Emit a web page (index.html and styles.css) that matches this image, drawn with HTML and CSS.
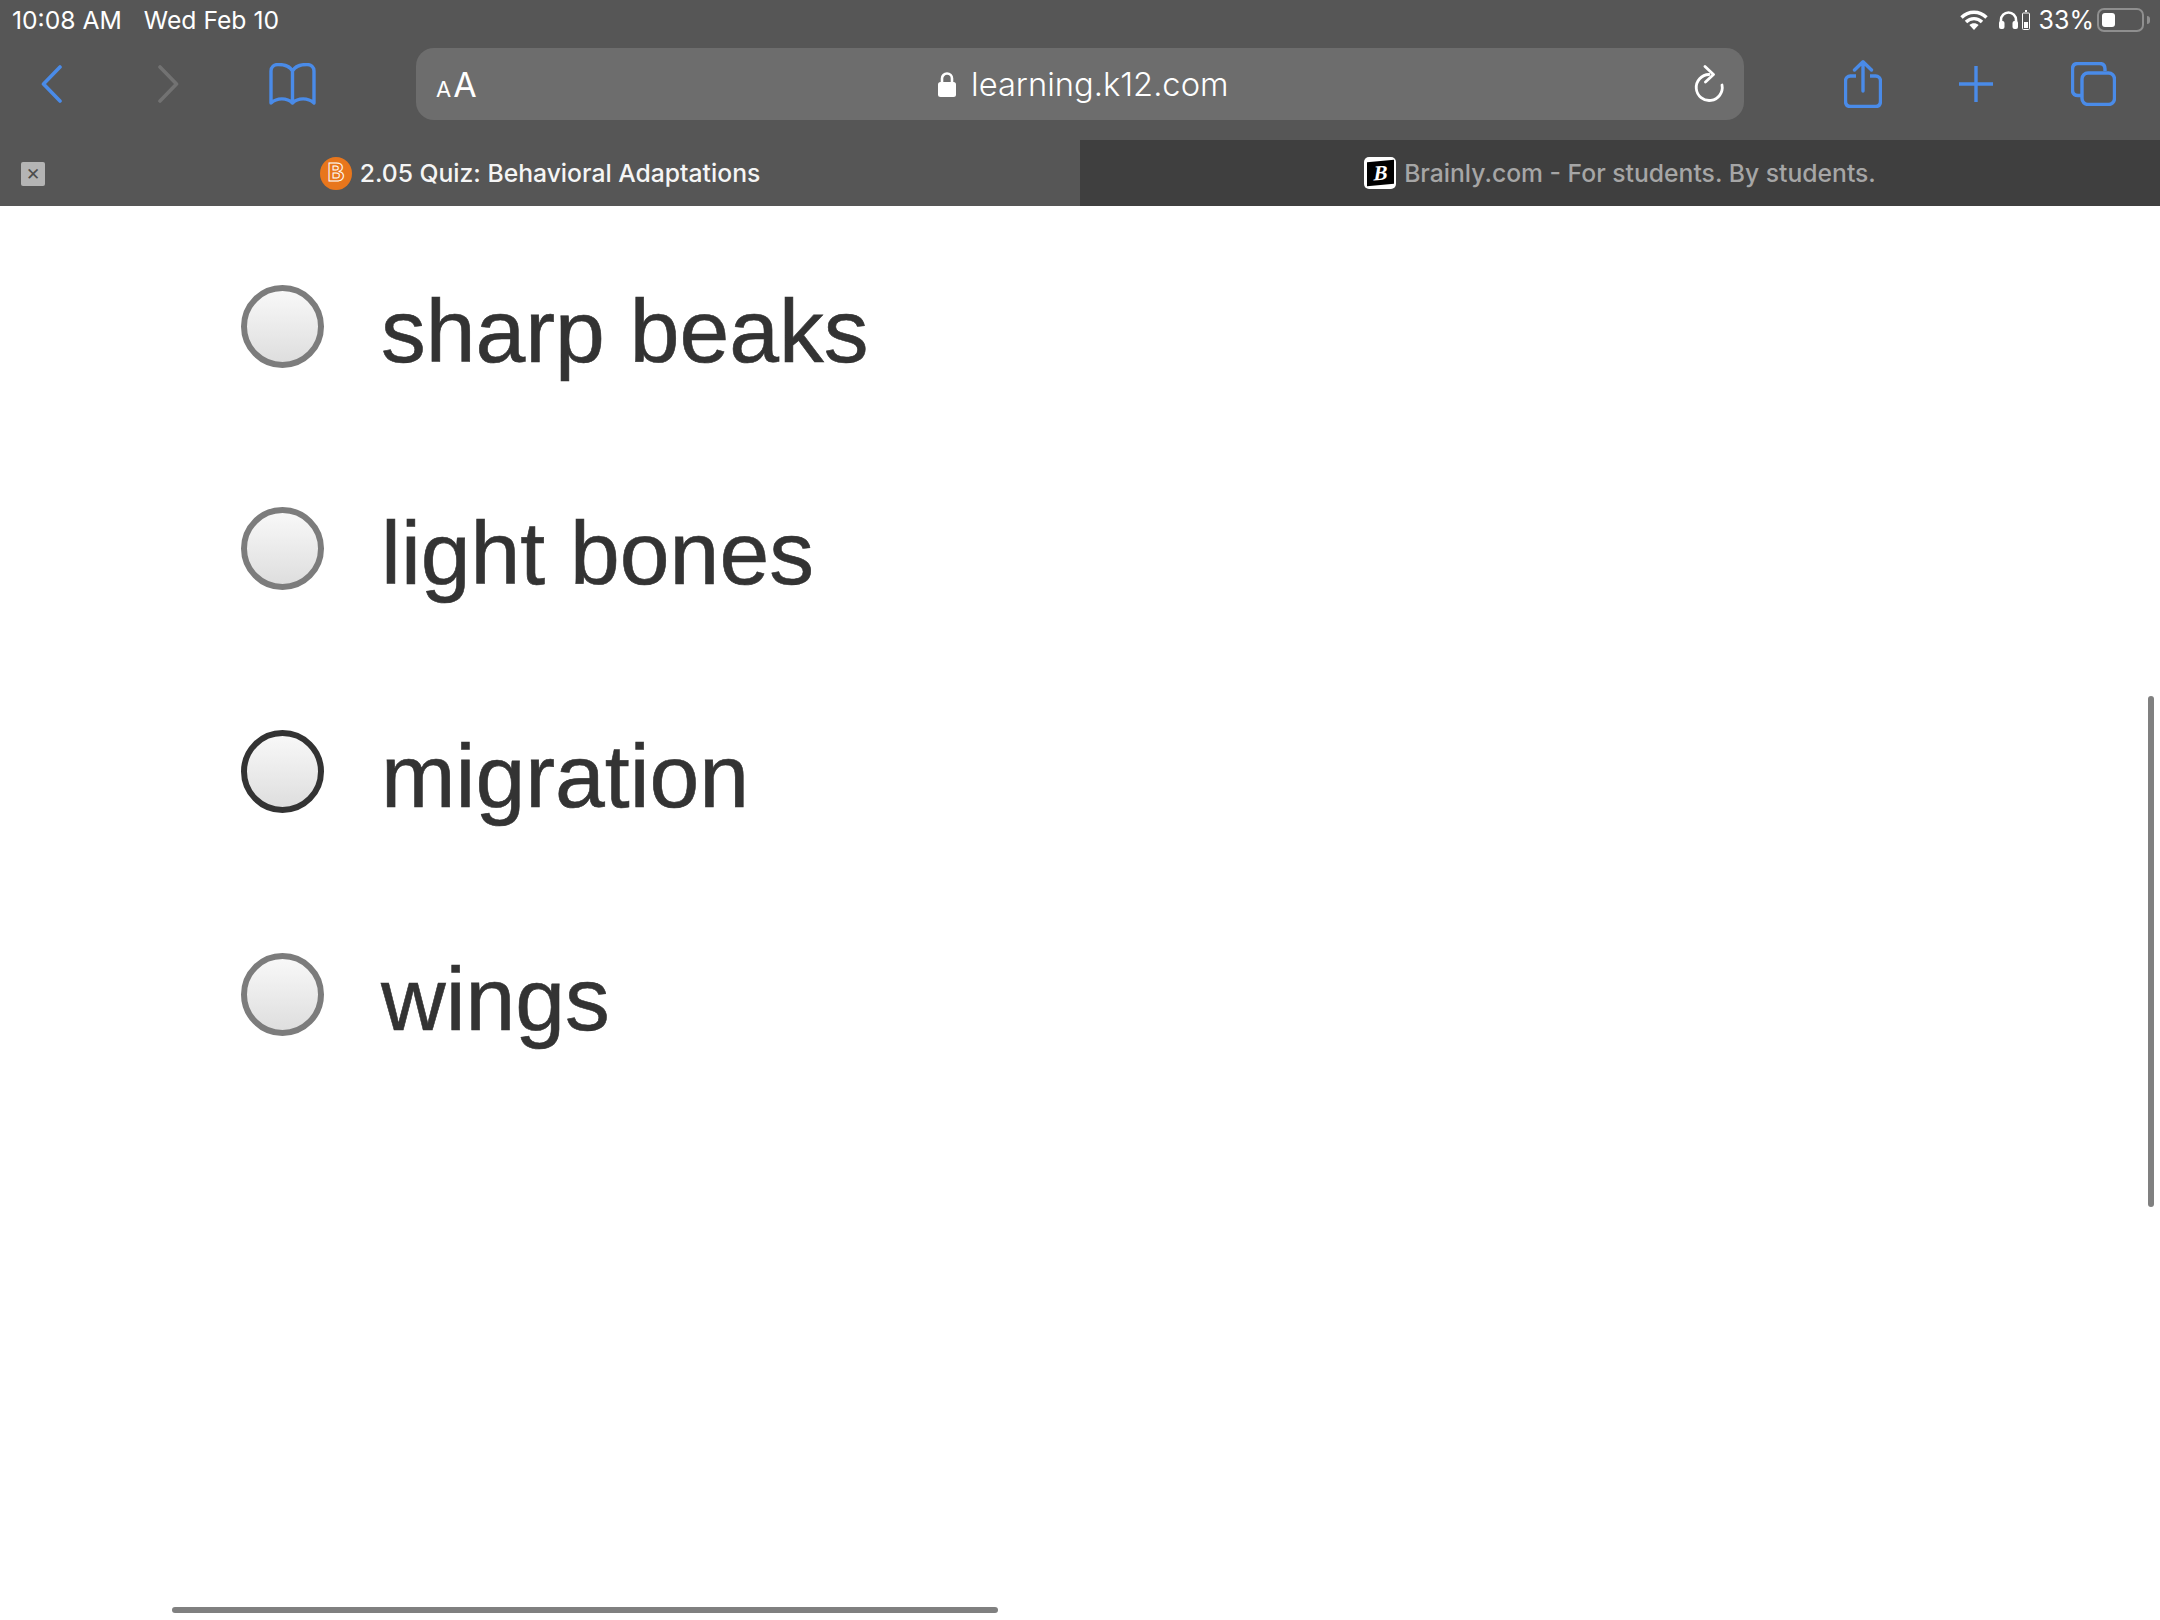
FILE: index.html
```html
<!DOCTYPE html>
<html lang="en">
<head>
    <meta charset="UTF-8">
    <title>2.05 Quiz: Behavioral Adaptations</title>
    <link rel="stylesheet" href="styles.css">
</head>
<body>
    <header class="browser_bar">
        <div class="status_row">
            <div class="status_left">
                <span>10:08 AM</span>
                <span>Wed Feb 10</span>
            </div>
            <div class="status_right">
                <svg class="wifi_icon" width="28" height="20" viewBox="0 0 28 20">
                    <path d="M1.5 7.5C8.5 .5 19.5 .5 26.5 7.5M6 12C10.5 7.5 17.5 7.5 22 12" fill="none" stroke="#fff" stroke-width="3.4"/>
                    <path d="M14 20l-4.6-5c2.6-2.2 6.6-2.2 9.2 0z" fill="#fff"/>
                </svg>
                <svg class="phones_icon" width="19" height="18" viewBox="0 0 19 18">
                    <path d="M2 12V9a7.5 7.5 0 0 1 15 0v3" fill="none" stroke="#fff" stroke-width="2.6"/>
                    <rect x="0" y="10" width="5.5" height="8" rx="2" fill="#fff"/>
                    <rect x="13.5" y="10" width="5.5" height="8" rx="2" fill="#fff"/>
                </svg>
                <svg class="case_icon" width="8" height="20" viewBox="0 0 8 20">
                    <rect x="3" y="0" width="2" height="2" fill="#fff"/>
                    <rect x="0.5" y="3" width="7" height="16.5" rx="1" fill="none" stroke="#fff"/>
                    <rect x="2" y="12" width="4" height="6" fill="#fff"/>
                </svg>
                <span class="percent">33%</span>
                <div class="battery"><div class="battery_fill"></div></div>
                <div class="battery_nub"></div>
            </div>
        </div>

        <div class="toolbar">
            <svg class="back_icon" width="21" height="38" viewBox="0 0 21 38">
                <path d="M19 2L2.5 19L19 36" fill="none" stroke="#4a8be8" stroke-width="3.6" stroke-linecap="round" stroke-linejoin="round"/>
            </svg>
            <svg class="forward_icon" width="21" height="38" viewBox="0 0 21 38">
                <path d="M2 2L18.5 19L2 36" fill="none" stroke="#727272" stroke-width="3.6" stroke-linecap="round" stroke-linejoin="round"/>
            </svg>
            <svg class="book_icon" width="47" height="42" viewBox="0 0 47 42">
                <path d="M23.5 8C21 3 15 1.500 9 1.500C5 1.500 2 4 2 8V40C8 34.500 18 34.500 23.500 40C29 34.500 39 34.500 45 40V8C45 4 42 1.500 38 1.500C32 1.500 26 3 23.500 8ZM23.500 8V40" fill="none" stroke="#4a8be8" stroke-width="3.400" stroke-linejoin="round"/>
            </svg>
            <div class="url_bar">
                <div class="text_size"><span class="small_a">A</span><span class="big_a">A</span></div>
                <div class="url_text">
                    <svg width="18" height="26" viewBox="0 0 18 26">
                        <path d="M4 13V7.500a5 5 0 0 1 10 0V13" fill="none" stroke="#fff" stroke-width="2.600"/>
                        <rect x="0" y="11" width="18" height="15" rx="2.500" fill="#fff"/>
                    </svg>
                    <span>learning.k12.com</span>
                </div>
                <svg class="reload_icon" width="32" height="38" viewBox="0 0 32 38">
                    <path d="M15 9.500A13 13 0 1 0 28 20" fill="none" stroke="#fff" stroke-width="2.800" stroke-linecap="round"/>
                    <path d="M11 1.500L19.500 9.500L11.500 17" fill="none" stroke="#fff" stroke-width="2.800" stroke-linecap="round" stroke-linejoin="round"/>
                </svg>
            </div>
            <svg class="share_icon" width="38" height="48" viewBox="0 0 38 48">
                <path d="M12 16H6.500C3.500 16 1.500 18 1.500 21V41C1.500 44.500 3.500 46.500 6.500 46.500H31.500C34.500 46.500 36.500 44.500 36.500 41V21C36.500 18 34.500 16 31.500 16H26" fill="none" stroke="#4a8be8" stroke-width="3.400"/>
                <path d="M19 31V2M10.500 10L19 1.800L27.500 10" fill="none" stroke="#4a8be8" stroke-width="3.400" stroke-linecap="round" stroke-linejoin="round"/>
            </svg>
            <svg class="plus_icon" width="34" height="36" viewBox="0 0 34 36">
                <path d="M17 0V36M0 18H34" fill="none" stroke="#4a8be8" stroke-width="3.400"/>
            </svg>
            <svg class="tabs_icon" width="45" height="44" viewBox="0 0 45 44">
                <path d="M34 9V7C34 3.500 32 1.500 28.500 1.500H7C3.500 1.500 1.500 3.500 1.500 7V28C1.500 31.500 3.500 33.500 7 33.500H11" fill="none" stroke="#4a8be8" stroke-width="3.400"/>
                <rect x="11" y="11" width="32.500" height="31.500" rx="6" fill="none" stroke="#4a8be8" stroke-width="3.400"/>
            </svg>
        </div>

        <div class="tab_row">
            <div class="tab tab_active">
                <div class="tab_close">&#10005;</div>
                <span class="favicon_bb">B</span>
                <span>2.05 Quiz: Behavioral Adaptations</span>
            </div>
            <div class="tab">
                <div class="favicon_brainly"><span>B</span></div>
                <span>Brainly.com - For students. By students.</span>
            </div>
        </div>
    </header>

    <main class="question">
        <label class="answer">
            <span class="radio"></span>
            <span class="answer_text">sharp beaks</span>
        </label>
        <label class="answer">
            <span class="radio"></span>
            <span class="answer_text">light bones</span>
        </label>
        <label class="answer">
            <span class="radio radio_focus"></span>
            <span class="answer_text">migration</span>
        </label>
        <label class="answer">
            <span class="radio"></span>
            <span class="answer_text">wings</span>
        </label>
    </main>

    <div class="scroll_v"></div>
    <div class="scroll_h"></div>
</body>
</html>
```

FILE: styles.css
```css
html, body {
    height: 100%;
    margin: 0;
    padding: 0;
    background: #fff;
    font-family: Inter, "Liberation Sans", sans-serif;
    overflow: hidden;
}

body {
    position: relative;
}

.browser_bar {
    background: #565656;
    color: #fff;
}

/* status bar */
.status_row {
    display: flex;
    justify-content: space-between;
    align-items: center;
    height: 40px;
    box-sizing: border-box;
    padding: 0 10px 0 12px;
}

.status_left {
    display: flex;
    gap: 22px;
    font-size: 24.7px;
}

.status_right {
    display: flex;
    align-items: center;
}

.phones_icon {
    margin-left: 11px;
}

.case_icon {
    margin-left: 4px;
}

.percent {
    font-size: 25px;
    margin-left: 9px;
}

.battery {
    width: 47px;
    height: 24px;
    box-sizing: border-box;
    margin-left: 3px;
    padding: 3px;
    border: 2px solid #8f8f8f;
    border-radius: 7px;
}

.battery_fill {
    width: 13px;
    height: 14px;
    background: #fff;
    border-radius: 3px;
}

.battery_nub {
    width: 3px;
    height: 8px;
    margin-left: 3px;
    background: #8f8f8f;
    border-radius: 0 3px 3px 0;
}

/* toolbar */
.toolbar {
    display: flex;
    align-items: center;
    height: 100px;
    box-sizing: border-box;
    padding: 8px 0 20px 41px;
}

.forward_icon {
    margin-left: 96px;
}

.book_icon {
    margin-left: 90px;
}

.url_bar {
    position: relative;
    display: flex;
    align-items: center;
    justify-content: space-between;
    width: 1328px;
    height: 72px;
    box-sizing: border-box;
    margin-left: 100px;
    padding: 0 18px 0 20px;
    background: #6d6d6d;
    border-radius: 18px;
}

.text_size {
    display: flex;
    align-items: baseline;
}

.small_a {
    font-size: 22px;
    margin-right: 2px;
}

.big_a {
    font-size: 34px;
}

.url_text {
    position: absolute;
    left: 522px;
    display: flex;
    align-items: center;
    gap: 15px;
    font-size: 32.7px;
    font-weight: 300;
}

.share_icon {
    margin-left: 100px;
}

.plus_icon {
    margin-left: 77px;
}

.tabs_icon {
    margin-left: 78px;
}

/* tabs */
.tab_row {
    display: flex;
    height: 66px;
}

.tab {
    position: relative;
    flex: 1;
    display: flex;
    align-items: center;
    justify-content: center;
    gap: 8px;
    font-size: 24.7px;
    font-weight: 500;
    background: #3f3f3f;
    color: #a6a6a6;
}

.tab_active {
    background: #565656;
    color: #f5f5f5;
}

.tab_close {
    position: absolute;
    left: 21px;
    top: 22px;
    width: 24px;
    height: 24px;
    line-height: 24px;
    text-align: center;
    font-size: 17px;
    background: #b4b4b4;
    color: #4d4d4d;
    border-radius: 2px;
}

.favicon_bb {
    width: 32px;
    height: 33px;
    line-height: 33px;
    text-align: center;
    font-family: "Liberation Mono", monospace;
    font-size: 28px;
    font-weight: 700;
    color: #e8761c;
    -webkit-text-stroke: 1px #fff;
    background: #e8761c;
    border-radius: 50%;
}

.favicon_brainly {
    display: flex;
    align-items: center;
    justify-content: center;
    width: 32px;
    height: 32px;
    background: #fff;
    border-radius: 5px;
}

.favicon_brainly span {
    width: 27px;
    height: 24px;
    line-height: 24px;
    text-align: center;
    font-family: "Liberation Serif", serif;
    font-size: 21px;
    font-weight: 700;
    font-style: italic;
    color: #fff;
    background: #000;
    transform: skewY(-5deg);
}

/* answers */
.question {
    padding: 9px 0 0 241px;
}

.answer {
    display: flex;
    align-items: center;
    gap: 57px;
    height: 222.6px;
}

.radio {
    width: 83px;
    height: 83px;
    box-sizing: border-box;
    border: 6px solid #7c7c7c;
    border-radius: 50%;
    background: linear-gradient(#f8f8f8, #dedede);
}

.radio_focus {
    border-color: #333;
}

.answer_text {
    font-family: "Liberation Sans", Arial, sans-serif;
    font-size: 89.5px;
    color: #333;
    margin-top: 10px;
    -webkit-text-stroke: 0.6px #333;
}

/* overlay scrollbars */
.scroll_v {
    position: absolute;
    left: 2148px;
    top: 696px;
    width: 6px;
    height: 511px;
    background: #808080;
    border-radius: 3px;
}

.scroll_h {
    position: absolute;
    left: 172px;
    top: 1607px;
    width: 826px;
    height: 6px;
    background: #808080;
    border-radius: 3px;
}
```
